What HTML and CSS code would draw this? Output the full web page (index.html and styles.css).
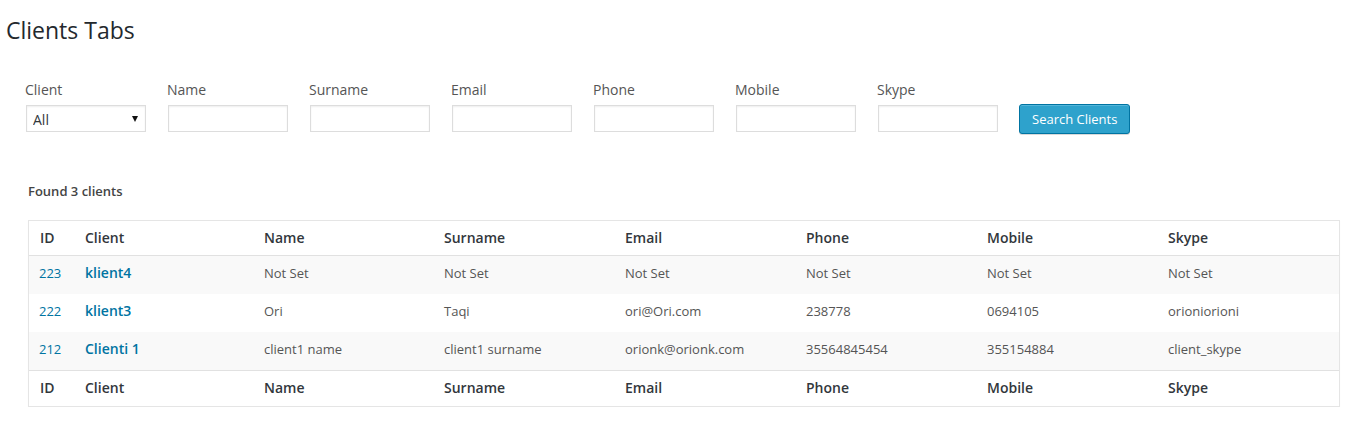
FILE: index.html
```html
<!DOCTYPE html>
<html>
<head>
<meta charset="utf-8">
<title>Clients Tabs</title>
<link rel="stylesheet" href="styles.css">
</head>
<body>
<div class="wrap">
  <h1 class="page-title">Clients Tabs</h1>

  <form class="filters">
    <div class="field">
      <label class="field-label">Client</label>
      <div class="select-wrap">
        <select class="select"><option>All</option></select>
      </div>
    </div>
    <div class="field">
      <label class="field-label">Name</label>
      <input class="text-input" type="text">
    </div>
    <div class="field">
      <label class="field-label">Surname</label>
      <input class="text-input" type="text">
    </div>
    <div class="field">
      <label class="field-label">Email</label>
      <input class="text-input" type="text">
    </div>
    <div class="field">
      <label class="field-label">Phone</label>
      <input class="text-input" type="text">
    </div>
    <div class="field">
      <label class="field-label">Mobile</label>
      <input class="text-input" type="text">
    </div>
    <div class="field">
      <label class="field-label">Skype</label>
      <input class="text-input" type="text">
    </div>
    <div class="field field-button">
      <button type="button" class="button-primary">Search Clients</button>
    </div>
  </form>

  <p class="found">Found 3 clients</p>

  <table class="clients-table">
    <colgroup>
      <col class="col-id">
      <col class="col-client">
      <col class="col-name">
      <col>
      <col>
      <col>
      <col>
      <col>
    </colgroup>
    <thead>
      <tr>
        <th class="cell-id">ID</th>
        <th>Client</th>
        <th>Name</th>
        <th>Surname</th>
        <th>Email</th>
        <th>Phone</th>
        <th>Mobile</th>
        <th>Skype</th>
      </tr>
    </thead>
    <tbody>
      <tr class="alt">
        <td class="cell-id"><a class="id-link" href="#">223</a></td>
        <td><a class="row-title" href="#">klient4</a></td>
        <td>Not Set</td>
        <td>Not Set</td>
        <td>Not Set</td>
        <td>Not Set</td>
        <td>Not Set</td>
        <td>Not Set</td>
      </tr>
      <tr>
        <td class="cell-id"><a class="id-link" href="#">222</a></td>
        <td><a class="row-title" href="#">klient3</a></td>
        <td>Ori</td>
        <td>Taqi</td>
        <td>ori@Ori.com</td>
        <td>238778</td>
        <td>0694105</td>
        <td>orioniorioni</td>
      </tr>
      <tr class="alt">
        <td class="cell-id"><a class="id-link" href="#">212</a></td>
        <td><a class="row-title" href="#">Clienti 1</a></td>
        <td>client1 name</td>
        <td>client1 surname</td>
        <td>orionk@orionk.com</td>
        <td>35564845454</td>
        <td>355154884</td>
        <td>client_skype</td>
      </tr>
    </tbody>
    <tfoot>
      <tr>
        <th class="cell-id">ID</th>
        <th>Client</th>
        <th>Name</th>
        <th>Surname</th>
        <th>Email</th>
        <th>Phone</th>
        <th>Mobile</th>
        <th>Skype</th>
      </tr>
    </tfoot>
  </table>
</div>
</body>
</html>
```

FILE: styles.css
```css
html, body {
  margin: 0;
  padding: 0;
  background: #ffffff;
}

body {
  font-family: "Open Sans", "Liberation Sans", sans-serif;
  font-size: 13px;
  color: #444444;
}

.wrap {
  padding: 15px 32px 0 6px;
}

.page-title {
  margin: 0;
  font-size: 23px;
  font-weight: 400;
  line-height: 31px;
  color: #23282d;
}

.filters {
  display: flex;
  align-items: flex-end;
  gap: 21px;
  margin: 34px 0 0 19px;
}

.field {
  display: flex;
  flex-direction: column;
  width: 121px;
}

.field-button {
  width: auto;
}

.field-label {
  font-size: 14px;
  line-height: 19px;
  color: #555555;
  margin-bottom: 6px;
}

.select-wrap {
  position: relative;
  width: 120px;
  margin-left: 1px;
}

.select-wrap::after {
  content: "";
  position: absolute;
  right: 8px;
  top: 11px;
  border-left: 3.5px solid transparent;
  border-right: 3.5px solid transparent;
  border-top: 6px solid #111111;
  pointer-events: none;
}

.select {
  -webkit-appearance: none;
  appearance: none;
  display: block;
  box-sizing: border-box;
  width: 120px;
  height: 27px;
  margin: 0;
  padding: 2px 20px 0 6px;
  border: 1px solid #dddddd;
  border-radius: 0;
  background: #ffffff;
  box-shadow: inset 0 1px 2px rgba(0, 0, 0, 0.07);
  font-family: "Open Sans", "Liberation Sans", sans-serif;
  font-size: 14px;
  color: #32373c;
}

.text-input {
  display: block;
  box-sizing: border-box;
  width: 120px;
  height: 27px;
  margin: 0 0 0 1px;
  padding: 3px 5px;
  border: 1px solid #dddddd;
  border-radius: 0;
  background: #ffffff;
  box-shadow: inset 0 1px 2px rgba(0, 0, 0, 0.07);
  font-family: "Open Sans", "Liberation Sans", sans-serif;
  font-size: 14px;
}

.button-primary {
  display: block;
  box-sizing: border-box;
  height: 30px;
  margin: 0 0 -2px 0;
  padding: 0 12px 1px;
  border: 1px solid #0074a2;
  border-radius: 3px;
  background: #2ea2cc;
  box-shadow: inset 0 1px 0 rgba(120, 200, 230, 0.5), 0 1px 0 rgba(0, 0, 0, 0.15);
  font-family: "Open Sans", "Liberation Sans", sans-serif;
  font-size: 13px;
  line-height: 26px;
  color: #ffffff;
  white-space: nowrap;
}

.found {
  margin: 50px 0 0 22px;
  font-size: 13px;
  font-weight: 600;
  line-height: 18px;
  color: #444444;
}

.clients-table {
  margin: 20px 0 0 22px;
  width: 1312px;
  table-layout: fixed;
  border-collapse: separate;
  border-spacing: 0;
  border: 1px solid #e5e5e5;
  box-shadow: 0 1px 1px rgba(0, 0, 0, 0.04);
  background: #ffffff;
}

.col-id { width: 46px; }
.col-client { width: 179px; }
.col-name { width: 180px; }

.clients-table th {
  text-align: left;
  font-size: 14px;
  font-weight: 600;
  line-height: 19px;
  color: #32373c;
  padding: 7px 10px 8px;
}

.clients-table thead th {
  border-bottom: 1px solid #e1e1e1;
}

.clients-table tfoot th {
  border-top: 1px solid #e1e1e1;
  padding: 7px 10px 9px;
}

.clients-table td {
  font-size: 13px;
  line-height: 22px;
  color: #555555;
  padding: 6px 10px 10px;
  vertical-align: middle;
  white-space: nowrap;
}

.clients-table tr.alt td {
  background: #f9f9f9;
}

.clients-table td.cell-id {
  padding-left: 10px;
  padding-right: 0;
}

.clients-table th.cell-id {
  padding-left: 11px;
  padding-right: 0;
}

.id-link {
  color: #0074a2;
  text-decoration: none;
  font-size: 13px;
}

.row-title {
  color: #0074a2;
  text-decoration: none;
  font-size: 14px;
  font-weight: 600;
}
```
